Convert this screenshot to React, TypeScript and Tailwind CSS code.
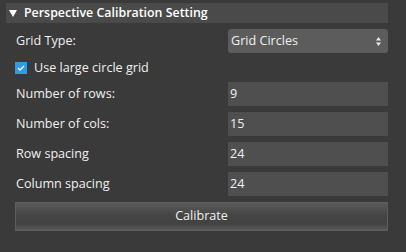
import { useState } from 'react'

const FIELDS = [
  { label: 'Number of rows:', value: '9' },
  { label: 'Number of cols:', value: '15' },
  { label: 'Row spacing', value: '24' },
  { label: 'Column spacing', value: '24' },
]

export default function App() {
  const [largeGrid, setLargeGrid] = useState(true)

  return (
    <div
      className="w-[406px] h-[252px] bg-[#3a3a3a] text-[12.6px] text-[#f0f0f0] overflow-hidden"
      style={{ fontFamily: '"Open Sans", "Noto Sans", sans-serif' }}
    >
      {/* header */}
      <div className="pt-[3px] pl-[6px] pr-[18px]">
        <div className="h-[20px] bg-[#4a4a4a] flex items-center pl-[3px] gap-[7px] font-semibold text-[12.4px] text-white">
          <svg width="8" height="7" viewBox="0 0 8 7" className="shrink-0">
            <path d="M0 0 L8 0 L4 7 Z" fill="#ffffff" />
          </svg>
          <span className="leading-none">Perspective Calibration Setting</span>
        </div>
      </div>

      <div className="pl-[15px] pr-[18px]">
        {/* grid type */}
        <div className="flex items-center h-[24px] mt-[6px]">
          <span className="flex-1 pl-px">Grid Type:</span>
          <div className="w-[160px] h-[24px] bg-[#5c5c5c] rounded-[3px] flex items-center pl-[3px] pr-[7px]">
            <span className="flex-1">Grid Circles</span>
            <svg width="5" height="9" viewBox="0 0 5 9">
              <path d="M0 3.5 L2.5 0 L5 3.5 Z M0 5.5 L5 5.5 L2.5 9 Z" fill="#e8e8e8" />
            </svg>
          </div>
        </div>

        {/* checkbox */}
        <label className="flex items-center h-[20px] mt-[5px] gap-[7px] cursor-pointer">
          <span
            onClick={() => setLargeGrid(!largeGrid)}
            className="w-[12px] h-[12px] bg-[#2d9de6] flex items-center justify-center"
          >
            {largeGrid && (
              <svg width="8" height="6" viewBox="0 0 8 6">
                <path d="M1 3 L3 5 L7 1" stroke="#ffffff" strokeWidth="1.3" fill="none" />
              </svg>
            )}
          </span>
          <span>Use large circle grid</span>
        </label>

        {/* numeric fields */}
        <div className="flex flex-col gap-[6px] mt-[4px]">
          {FIELDS.map((f) => (
            <div key={f.label} className="flex items-center h-[24px]">
              <span className="flex-1 pl-px">{f.label}</span>
              <div className="w-[160px] h-[24px] bg-[#4f4f4f] flex items-center pl-[2px]">
                {f.value}
              </div>
            </div>
          ))}
        </div>

        {/* button */}
        <button className="mt-[6px] w-full h-[29px] border border-[#5e5e5e] bg-[linear-gradient(#5a5a5a,#454545_45%,#424242_75%,#5a5a5a)] text-[#f0f0f0] flex items-center justify-center">
          Calibrate
        </button>
      </div>
    </div>
  )
}
